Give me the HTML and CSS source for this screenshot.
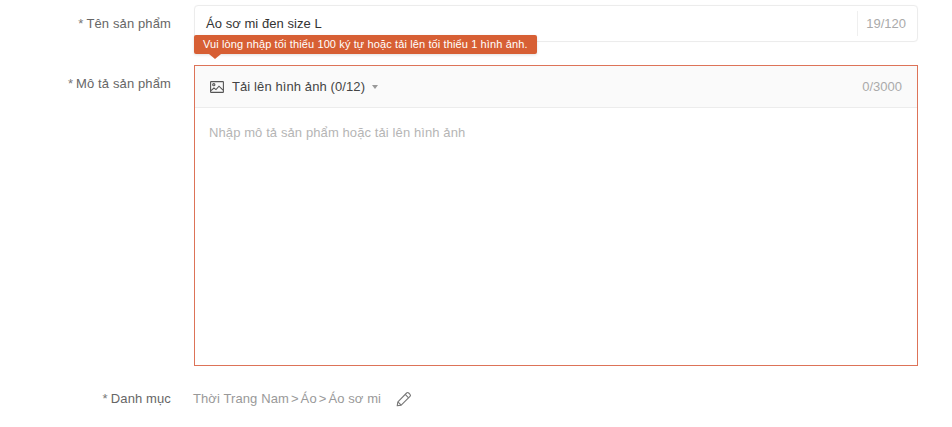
FILE: index.html
```html
<!DOCTYPE html>
<html lang="vi">
<head>
<meta charset="utf-8">
<title>Sản phẩm</title>
<link rel="stylesheet" href="styles.css">
</head>
<body>
<form class="form">
  <div class="row row-name">
    <div class="label"><span class="req">*</span>Tên sản phẩm</div>
    <div class="field">
      <div class="input">
        <span class="input-text">Áo sơ mi đen size L</span>
        <span class="count">19/120</span>
      </div>
      <div class="tip">Vui lòng nhập tối thiểu 100 ký tự hoặc tải lên tối thiểu 1 hình ảnh.</div>
    </div>
  </div>
  <div class="row row-desc">
    <div class="label label-desc"><span class="req">*</span>Mô tả sản phẩm</div>
    <div class="editor">
      <div class="editor-head">
        <svg class="img-icon" width="14" height="12" viewBox="0 0 14 12" fill="none" stroke="#555" stroke-width="1.1">
          <rect x="0.6" y="0.6" width="12.8" height="10.8" rx="0.5"/>
          <path d="M1 9.6l3-2.6 2 1.6 3-3.4 4 4"/>
          <circle cx="3.8" cy="3.7" r="1.1"/>
        </svg>
        <span class="upload">Tải lên hình ảnh (0/12)</span>
        <span class="caret"></span>
        <span class="total">0/3000</span>
      </div>
      <div class="editor-body">Nhập mô tả sản phẩm hoặc tải lên hình ảnh</div>
    </div>
  </div>
  <div class="row row-cat">
    <div class="label"><span class="req">*</span>Danh mục</div>
    <div class="cat">
      <span>Thời Trang Nam</span><span class="sep">&gt;</span><span>Áo</span><span class="sep">&gt;</span><span>Áo sơ mi</span>
      <svg class="pen" width="16" height="16" viewBox="0 0 16 16" fill="none" stroke="#777" stroke-width="1.1" stroke-linejoin="round">
        <path d="M1.2 14.8l.7-4L10.6 2a1.5 1.5 0 0 1 2.1 0l1.3 1.3a1.5 1.5 0 0 1 0 2.1l-8.8 8.7z"/>
        <path d="M9.2 3.4l3.4 3.4M1.9 10.8l3.3 3.3"/>
      </svg>
    </div>
  </div>
</form>
</body>
</html>
```
FILE: styles.css
```css
html, body { margin: 0; background: #fff; }
body {
  width: 952px;
  height: 427px;
  overflow: hidden;
  font-family: "Liberation Sans", Arial, sans-serif;
  font-size: 13px;
  color: #333;
}
.form { display: flex; flex-direction: column; padding: 5px 34px 0 0; }
.row { display: flex; gap: 23px; }
.label {
  width: 171px;
  flex: none;
  text-align: right;
  color: #666;
  font-size: 13px;
  line-height: 37px;
  letter-spacing: .12px;
}
.req { margin-right: 3px; color: #777; }
.label-desc { line-height: 37px; }
.field { position: relative; flex: 1; }
.input {
  height: 37px;
  box-sizing: border-box;
  display: flex;
  align-items: center;
  padding: 0 11px 0 11px;
  border: 1px solid #ececec;
  border-radius: 4px;
  box-shadow: 0 0 1px rgba(0,0,0,.06);
}
.input-text { flex: 1; color: #333; letter-spacing: .05px; }
.count {
  color: #aaa;
  line-height: 25px;
  padding-left: 8px;
  border-left: 1px solid #efefef;
}
.tip {
  position: absolute;
  left: 0;
  top: 30px;
  height: 19px;
  padding: 0 9px 0 9px;
  border-radius: 2px;
  background: #d75f34;
  color: #fff;
  font-size: 11px;
  line-height: 18px;
  letter-spacing: .12px;
  white-space: nowrap;
  box-shadow: 0 1px 3px rgba(0,0,0,.12);
}
.tip::after {
  content: "";
  position: absolute;
  left: 15px;
  top: 19px;
  border: 6px solid transparent;
  border-top: 5px solid #d75f34;
  border-bottom: 0;
}
.row-desc { margin-top: 23px; }
.editor {
  flex: 1;
  height: 301px;
  box-sizing: border-box;
  border: 1px solid #dd7358;
  display: flex;
  flex-direction: column;
}
.editor-head {
  height: 41px;
  flex: none;
  display: flex;
  align-items: center;
  padding: 0 15px;
  background: #fafafa;
  border-bottom: 1px solid #ececec;
}
.img-icon { margin-right: 8px; }
.upload { color: #444; letter-spacing: .1px; }
.caret {
  margin-left: 7px;
  margin-top: 1px;
  border: 3.5px solid transparent;
  border-top: 4px solid #999;
  border-bottom: 0;
}
.total { margin-left: auto; color: #aaa; }
.editor-body { padding: 17px 14px; color: #b5b5b5; font-size: 13px; line-height: 16px; letter-spacing: .1px; }
.row-cat { margin-top: 14px; }
.cat { display: flex; align-items: center; height: 37px; color: #999; margin-left: -1px; letter-spacing: .1px; }
.sep { margin: 0 2px; }
.pen { margin-left: 15px; }
```
